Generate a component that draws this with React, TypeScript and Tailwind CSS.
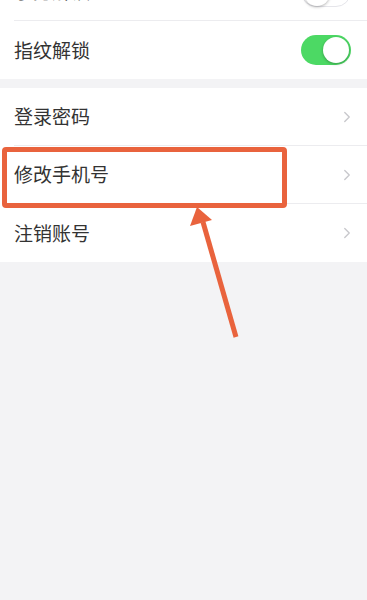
import { ChevronRight } from "lucide-react";

function Toggle({ on }: { on: boolean }) {
  return (
    <div
      className={`w-[50px] h-[30px] rounded-full p-[2px] flex ${
        on ? "bg-[#4cd964] justify-end" : "bg-white border border-[#e5e5ea] justify-start"
      }`}
    >
      <div className="w-[26px] h-[26px] rounded-full bg-white shadow-[0_1px_3px_rgba(0,0,0,0.3)]" />
    </div>
  );
}

function Row({
  label,
  right,
  divider = true,
}: {
  label: string;
  right: React.ReactNode;
  divider?: boolean;
}) {
  return (
    <div className="pl-[14px] bg-white">
      <div
        className={`h-[58px] flex items-center justify-between ${
          divider ? "border-b border-[#ececef]" : ""
        }`}
      >
        <span className="text-[19px] text-[#333]">{label}</span>
        {right}
      </div>
    </div>
  );
}

const chevron = (
  <ChevronRight className="w-[18px] h-[18px] mr-[11px] text-[#c8c8cc]" strokeWidth={1.8} />
);

export default function App() {
  return (
    <div
      className="relative w-[367px] h-[600px] overflow-hidden bg-[#f3f3f5]"
      style={{ fontFamily: '"Noto Sans CJK SC", "Noto Sans", sans-serif' }}
    >
      <div className="-mt-[37px]">
        <Row label="手势解锁" right={<div className="mr-[16px]"><Toggle on={false} /></div>} />
        <Row label="指纹解锁" right={<div className="mr-[16px]"><Toggle on /></div>} divider={false} />
      </div>
      <div className="mt-[9px]">
        <Row label="登录密码" right={chevron} />
        <Row label="修改手机号" right={chevron} />
        <Row label="注销账号" right={chevron} divider={false} />
      </div>

      {/* annotation */}
      <div className="absolute left-[2px] top-[147px] w-[285px] h-[61px] border-[5px] border-[#e9633d] rounded-[4px]" />
      <svg className="absolute left-0 top-0" width="367" height="600" viewBox="0 0 367 600">
        <line x1="236" y1="337" x2="203" y2="222" stroke="#e9633d" strokeWidth="5" />
        <polygon points="197,207 190,226 212,220" fill="#e9633d" />
      </svg>
    </div>
  );
}
